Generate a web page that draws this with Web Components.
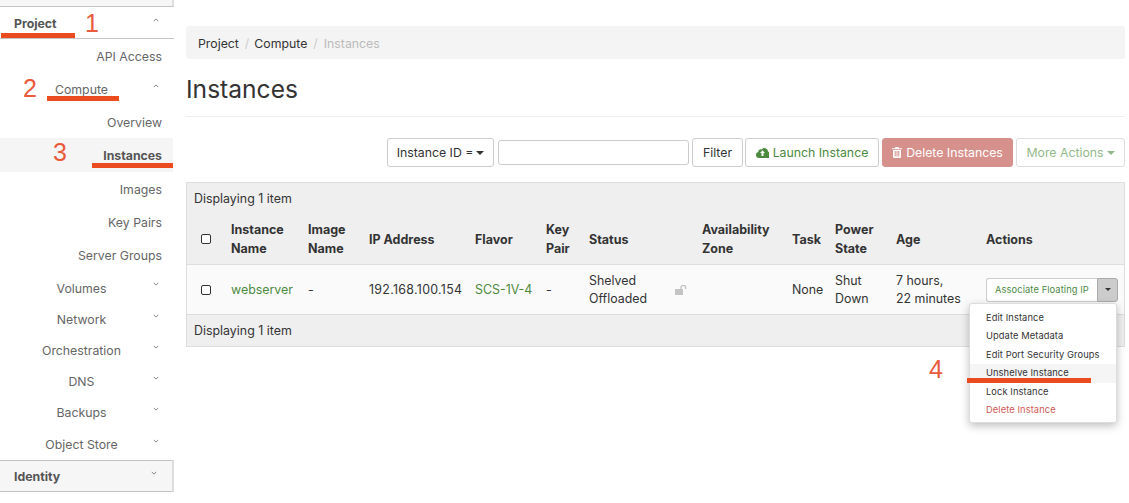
<!DOCTYPE html>
<html>
<head>
<meta charset="utf-8">
<style>
  html, body { margin: 0; height: 503px; overflow: hidden; background: #fff; }
  body { font-family: Inter, "Liberation Sans", sans-serif; font-size: 12.3px; color: #333; display: flex; position: relative; }
</style>
</head>
<body>
<side-nav>
  <nav-row kind="head" arrow="up" pad="2">Project</nav-row>
  <nav-row h="33" pad="2">API Access</nav-row>
  <nav-row kind="group" arrow="up" h="33" pad="2">Compute</nav-row>
  <nav-row h="33" pad="2">Overview</nav-row>
  <nav-row kind="active" h="34">Instances</nav-row>
  <nav-row h="33" pad="2">Images</nav-row>
  <nav-row h="33" pad="2">Key Pairs</nav-row>
  <nav-row h="33" pad="2">Server Groups</nav-row>
  <nav-row kind="group" arrow="down" h="32" pad="2">Volumes</nav-row>
  <nav-row kind="group" arrow="down" h="31" pad="2">Network</nav-row>
  <nav-row kind="group" arrow="down" h="31" pad="2">Orchestration</nav-row>
  <nav-row kind="group" arrow="down" h="31" pad="2">DNS</nav-row>
  <nav-row kind="group" arrow="down" h="31" pad="2">Backups</nav-row>
  <nav-row kind="group" arrow="down" h="33" pad="1">Object Store</nav-row>
  <nav-row kind="foot" arrow="down">Identity</nav-row>
</side-nav>
<main-panel>
  <bread-crumbs></bread-crumbs>
  <page-title>Instances</page-title>
  <tool-bar></tool-bar>
  <instance-table></instance-table>
</main-panel>
<anno-marks></anno-marks>

<script>
const templateSideNav = document.createElement("template");
templateSideNav.innerHTML = `
  <style>
    :host { display: block; width: 174px; height: 491px; flex: none; }
    .top { height: 6px; background: #f6f6f6; border-bottom: 1px solid #c4c4c4; border-right: 2px solid #ddd; }
  </style>
  <div class="top"></div>
  <slot></slot>
`;
class SideNav extends HTMLElement {
  constructor() {
    super();
    this.attachShadow({ mode: "open" });
    this.shadowRoot.appendChild(templateSideNav.content.cloneNode(true));
  }
}
customElements.define("side-nav", SideNav);

const templateNavRow = document.createElement("template");
templateNavRow.innerHTML = `
  <style>
    :host { display: flex; align-items: center; box-sizing: border-box; color: #666; font-size: 12.3px; position: relative; }
    :host([kind="head"]), :host([kind="foot"]) { font-weight: 700; color: #555; padding-left: 14px; }
    :host([kind="head"]) { height: 32px; background: #fff; border-bottom: 1px solid #c4c4c4; }
    :host([kind="foot"]) { height: 32px; background: #f6f6f6; border-top: 1px solid #c4c4c4; border-bottom: 1px solid #c4c4c4; border-right: 2px solid #ddd; }
    :host(:not([kind])) { justify-content: flex-end; padding-right: 11px; width: 173px; }
    :host([kind="active"]) { justify-content: flex-end; padding-right: 11px; width: 173px; background: #f5f5f5; font-weight: 700; color: #555; }
    :host([kind="group"]) { justify-content: center; padding-right: 11px; }
    svg { position: absolute; right: 15px; top: 50%; margin-top: -5px; width: 6px; height: 4px; fill: none; stroke: #777; stroke-width: 1.2; display: none; }
    :host([arrow]) svg { display: block; }
  </style>
  <slot></slot>
  <svg viewBox="0 0 8 5"><path d="M1 1l3 3 3-3"/></svg>
`;
class NavRow extends HTMLElement {
  constructor() {
    super();
    this.attachShadow({ mode: "open" });
    this.shadowRoot.appendChild(templateNavRow.content.cloneNode(true));
  }
  connectedCallback() {
    if (this.getAttribute("h")) this.style.height = this.getAttribute("h") + "px";
    if (this.getAttribute("pad")) this.style.paddingTop = this.getAttribute("pad") + "px";
    if (this.getAttribute("arrow") == "up") {
      this.shadowRoot.querySelector("path").setAttribute("d", "M1 4l3-3 3 3");
    }
  }
}
customElements.define("nav-row", NavRow);

const templateMainPanel = document.createElement("template");
templateMainPanel.innerHTML = `
  <style>
    :host { display: block; flex: 1; min-width: 0; padding: 26px 4px 0 12px; }
  </style>
  <slot></slot>
`;
class MainPanel extends HTMLElement {
  constructor() {
    super();
    this.attachShadow({ mode: "open" });
    this.shadowRoot.appendChild(templateMainPanel.content.cloneNode(true));
  }
}
customElements.define("main-panel", MainPanel);

const templateCrumbs = document.createElement("template");
templateCrumbs.innerHTML = `
  <style>
    :host { display: flex; align-items: center; box-sizing: border-box; height: 33px; background: #f4f4f4; border-radius: 3px; padding: 2px 0 0 12px; font-size: 12.3px; color: #333; }
    i { font-style: normal; color: #ccc; padding: 0 5px 0 6px; }
    .now { color: #bbb; margin-left: 1px; }
  </style>
  <span>Project</span><i>/</i><span>Compute</span><i>/</i><span class="now">Instances</span>
`;
class BreadCrumbs extends HTMLElement {
  constructor() {
    super();
    this.attachShadow({ mode: "open" });
    this.shadowRoot.appendChild(templateCrumbs.content.cloneNode(true));
  }
}
customElements.define("bread-crumbs", BreadCrumbs);

const templateTitle = document.createElement("template");
templateTitle.innerHTML = `
  <style>
    :host { display: block; height: 58px; box-sizing: border-box; border-bottom: 1px solid #eee; font-size: 24.6px; line-height: 60px; color: #333; }
  </style>
  <slot></slot>
`;
class PageTitle extends HTMLElement {
  constructor() {
    super();
    this.attachShadow({ mode: "open" });
    this.shadowRoot.appendChild(templateTitle.content.cloneNode(true));
  }
}
customElements.define("page-title", PageTitle);

const templateToolBar = document.createElement("template");
templateToolBar.innerHTML = `
  <style>
    :host { display: flex; justify-content: flex-end; gap: 3px; margin-top: 21px; height: 29px; font-size: 12.3px; }
    .box { display: flex; align-items: center; justify-content: center; box-sizing: border-box; height: 29px; border: 1px solid #ccc; border-radius: 3px; background: #fff; color: #333; white-space: nowrap; }
    .input { width: 191px; height: 25px; margin: 2px 0 0 1px; }
    .green { color: #4c8a3f; margin-left: -1px; }
    .delete { background: #d6918c; border-color: #d6918c; color: #fff; }
    .more { color: #93b98b; border-color: #ddd; }
    .caret { display: inline-block; width: 0; height: 0; border: 4px solid transparent; border-top-color: currentColor; border-bottom: 0; margin-left: 3px; }
    svg { display: block; margin-right: 4px; }
  </style>
  <div class="box" style="width:107px">Instance ID =<span class="caret"></span></div>
  <div class="box input"></div>
  <div class="box" style="width:51px">Filter</div>
  <div class="box green" style="width:134px"><svg width="13" height="11" viewBox="0 0 13 11"><path fill="#4c8a3f" d="M3 11A3 3 0 0 1 2.2 5.1 3 3 0 0 1 5.6 2.4 3.6 3.6 0 0 1 12 4.6 3.3 3.3 0 0 1 10 11Z"/><path fill="#fff" d="M6.5 3.2 9 5.9H7.5V9h-2V5.9H4Z"/></svg>Launch Instance</div>
  <div class="box delete" style="width:131px"><svg width="10" height="11" viewBox="0 0 10 11"><path fill="#fff" d="M3.5 0h3l.6 1.2H10v1H0v-1h2.9ZM1 3h8v7a1 1 0 0 1-1 1H2a1 1 0 0 1-1-1Z"/><path stroke="#d6918c" d="M3.2 4v5.5M5 4v5.5M6.8 4v5.5"/></svg>Delete Instances</div>
  <div class="box more" style="width:109px">More Actions<span class="caret"></span></div>
`;
class ToolBar extends HTMLElement {
  constructor() {
    super();
    this.attachShadow({ mode: "open" });
    this.shadowRoot.appendChild(templateToolBar.content.cloneNode(true));
  }
}
customElements.define("tool-bar", ToolBar);

const templateTable = document.createElement("template");
templateTable.innerHTML = `
  <style>
    :host { display: block; margin-top: 15px; position: relative; font-size: 12.4px; color: #333; }
    table { border-collapse: collapse; table-layout: fixed; width: 939px; line-height: 18px; outline: 1px solid #ddd; outline-offset: -1px; }
    th, td { padding: 0 0 0 8px; text-align: left; vertical-align: middle; border: 1px solid #ddd; border-width: 1px 0; }
    .info td { background: #efefef; height: 31px; }
    .info:first-child td { border-bottom: 0; }
    .head th { background: #efefef; height: 50px; border-top: 0; font-weight: 700; font-size: 12.5px; line-height: 19px; }
    .row td { background: #fafafa; height: 50px; box-sizing: border-box; }
    a { color: #4c8a3f; }
    .ip { letter-spacing: .3px; white-space: nowrap; }
    input { appearance: none; display: block; margin: 0 0 0 7px; width: 10px; height: 10px; border: 1px solid #333; border-radius: 2px; background: #fff; box-sizing: border-box; }
    .row input { margin-top: 1px; }
    .lock { display: flex; align-items: center; }
    .lock span { width: 66px; flex: none; }
    .lock svg { margin-left: 20px; flex: none; }
    .split { display: flex; width: 132px; height: 24px; font-size: 9.3px; }
    .split span { flex: 1; display: flex; align-items: center; justify-content: center; border: 1px solid #ccc; border-right: 0; border-radius: 3px 0 0 3px; background: #fff; color: #4c8a3f; letter-spacing: .1px; white-space: nowrap; }
    .split b { width: 21px; box-sizing: border-box; display: flex; align-items: center; justify-content: center; background: #ccc; border: 1px solid #aaa; border-radius: 0 3px 3px 0; }
    .split b::after { content: ""; border: 3px solid transparent; border-top-color: #333; border-bottom: 0; }
    .menu { position: absolute; left: 783px; top: 121px; width: 148px; height: 120px; background: #fff; border: 1px solid #ddd; border-radius: 3px; box-shadow: 0 3px 8px rgba(0,0,0,.25); padding: 5px 0 0; font-size: 9.3px; letter-spacing: .1px; color: #333; z-index: 2; box-sizing: border-box; }
    .menu div { height: 18.4px; line-height: 18.4px; padding-left: 16px; white-space: nowrap; }
    .menu .hover { background: #f5f5f5; }
    .menu .danger { color: #cf5a55; }
  </style>
  <table>
    <colgroup>
      <col style="width:37px"><col style="width:77px"><col style="width:61px"><col style="width:106px"><col style="width:71px"><col style="width:43px"><col style="width:113px"><col style="width:90px"><col style="width:43px"><col style="width:61px"><col style="width:90px"><col>
    </colgroup>
    <tr class="info"><td colspan="12">Displaying 1 item</td></tr>
    <tr class="head">
      <th><input type="checkbox"></th><th>Instance Name</th><th>Image Name</th><th>IP Address</th><th>Flavor</th><th>Key Pair</th><th>Status</th><th>Availability Zone</th><th>Task</th><th>Power State</th><th>Age</th><th>Actions</th>
    </tr>
    <tr class="row">
      <td><input type="checkbox"></td><td><a>webserver</a></td><td>-</td><td class="ip">192.168.100.154</td><td><a>SCS-1V-4</a></td><td>-</td>
      <td><div class="lock"><span>Shelved Offloaded</span><svg width="13" height="10" viewBox="0 0 13 10"><path fill="#c4c4c4" d="M0 4h8v6H0Z"/><path fill="none" stroke="#c4c4c4" stroke-width="1.4" d="M6 4V2.6a2.3 2.3 0 0 1 4.6 0V4"/></svg></div></td>
      <td></td><td>None</td><td>Shut Down</td><td>7 hours,<br>22 minutes</td>
      <td><div class="split"><span>Associate Floating IP</span><b></b></div></td>
    </tr>
    <tr class="info"><td colspan="12">Displaying 1 item</td></tr>
  </table>
  <div class="menu">
    <div>Edit Instance</div>
    <div>Update Metadata</div>
    <div>Edit Port Security Groups</div>
    <div class="hover">Unshelve Instance</div>
    <div>Lock Instance</div>
    <div class="danger">Delete Instance</div>
  </div>
`;
class InstanceTable extends HTMLElement {
  constructor() {
    super();
    this.attachShadow({ mode: "open" });
    this.shadowRoot.appendChild(templateTable.content.cloneNode(true));
  }
}
customElements.define("instance-table", InstanceTable);

// orange notes drawn over the screenshot
const templateMarks = document.createElement("template");
templateMarks.innerHTML = `
  <style>
    :host { position: absolute; left: 0; top: 0; width: 1129px; height: 503px; pointer-events: none; z-index: 5; display: block; }
    .n { position: absolute; font: 25px/28px "Liberation Sans", sans-serif; color: #ea5a3c; }
    .l { position: absolute; height: 5px; background: #ea4c20; }
  </style>
  <span class="n" style="left:85px;top:9px">1</span>
  <span class="n" style="left:23px;top:74px">2</span>
  <span class="n" style="left:53px;top:138px">3</span>
  <span class="n" style="left:929px;top:355px">4</span>
  <div class="l" style="left:1px;top:33px;width:74px"></div>
  <div class="l" style="left:47px;top:96px;width:72px"></div>
  <div class="l" style="left:92px;top:163px;width:81px"></div>
  <div class="l" style="left:967px;top:378px;width:124px"></div>
`;
class AnnoMarks extends HTMLElement {
  constructor() {
    super();
    this.attachShadow({ mode: "open" });
    this.shadowRoot.appendChild(templateMarks.content.cloneNode(true));
  }
}
customElements.define("anno-marks", AnnoMarks);
</script>
</body>
</html>
